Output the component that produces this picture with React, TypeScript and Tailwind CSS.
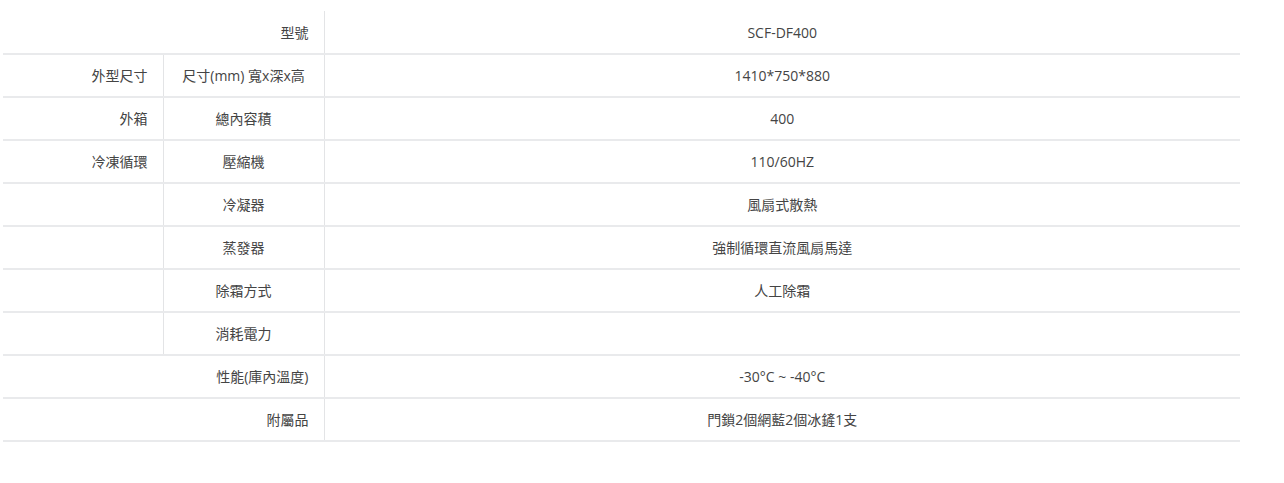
const font = { fontFamily: '"Open Sans", "Noto Sans CJK TC", sans-serif' }

type Row = { a?: string; b?: string; v: string; span?: boolean }

const rows: Row[] = [
  { a: '型號', v: 'SCF-DF400', span: true },
  { a: '外型尺寸', b: '尺寸(mm) 寬x深x高', v: '1410*750*880' },
  { a: '外箱', b: '總內容積', v: '400' },
  { a: '冷凍循環', b: '壓縮機', v: '110/60HZ' },
  { b: '冷凝器', v: '風扇式散熱' },
  { b: '蒸發器', v: '強制循環直流風扇馬達' },
  { b: '除霜方式', v: '人工除霜' },
  { b: '消耗電力', v: '' },
  { a: '性能(庫內溫度)', v: '-30°C ~ -40°C', span: true },
  { a: '附屬品', v: '門鎖2個網藍2個冰鏟1支', span: true },
]

export default function App() {
  return (
    <div className="min-h-[483px] bg-white pt-[11px] pl-[3px]" style={font}>
      <table className="w-[1237px] table-fixed border-collapse text-[14px] text-[#444]">
        <colgroup>
          <col className="w-[160px]" />
          <col className="w-[161px]" />
          <col />
        </colgroup>
        <tbody>
          {rows.map((r, i) => (
            <tr key={i} className="h-[43px] border-b-2 border-[#e9eaec]">
              {r.span ? (
                <td colSpan={2} className="pr-[15px] text-right align-middle">
                  {r.a}
                </td>
              ) : (
                <>
                  <td className="pr-[15px] text-right align-middle">{r.a}</td>
                  <td className="border-l border-[#e3e4e6] text-center align-middle">{r.b}</td>
                </>
              )}
              <td className="border-l border-[#e3e4e6] text-center align-middle">{r.v}</td>
            </tr>
          ))}
        </tbody>
      </table>
    </div>
  )
}
